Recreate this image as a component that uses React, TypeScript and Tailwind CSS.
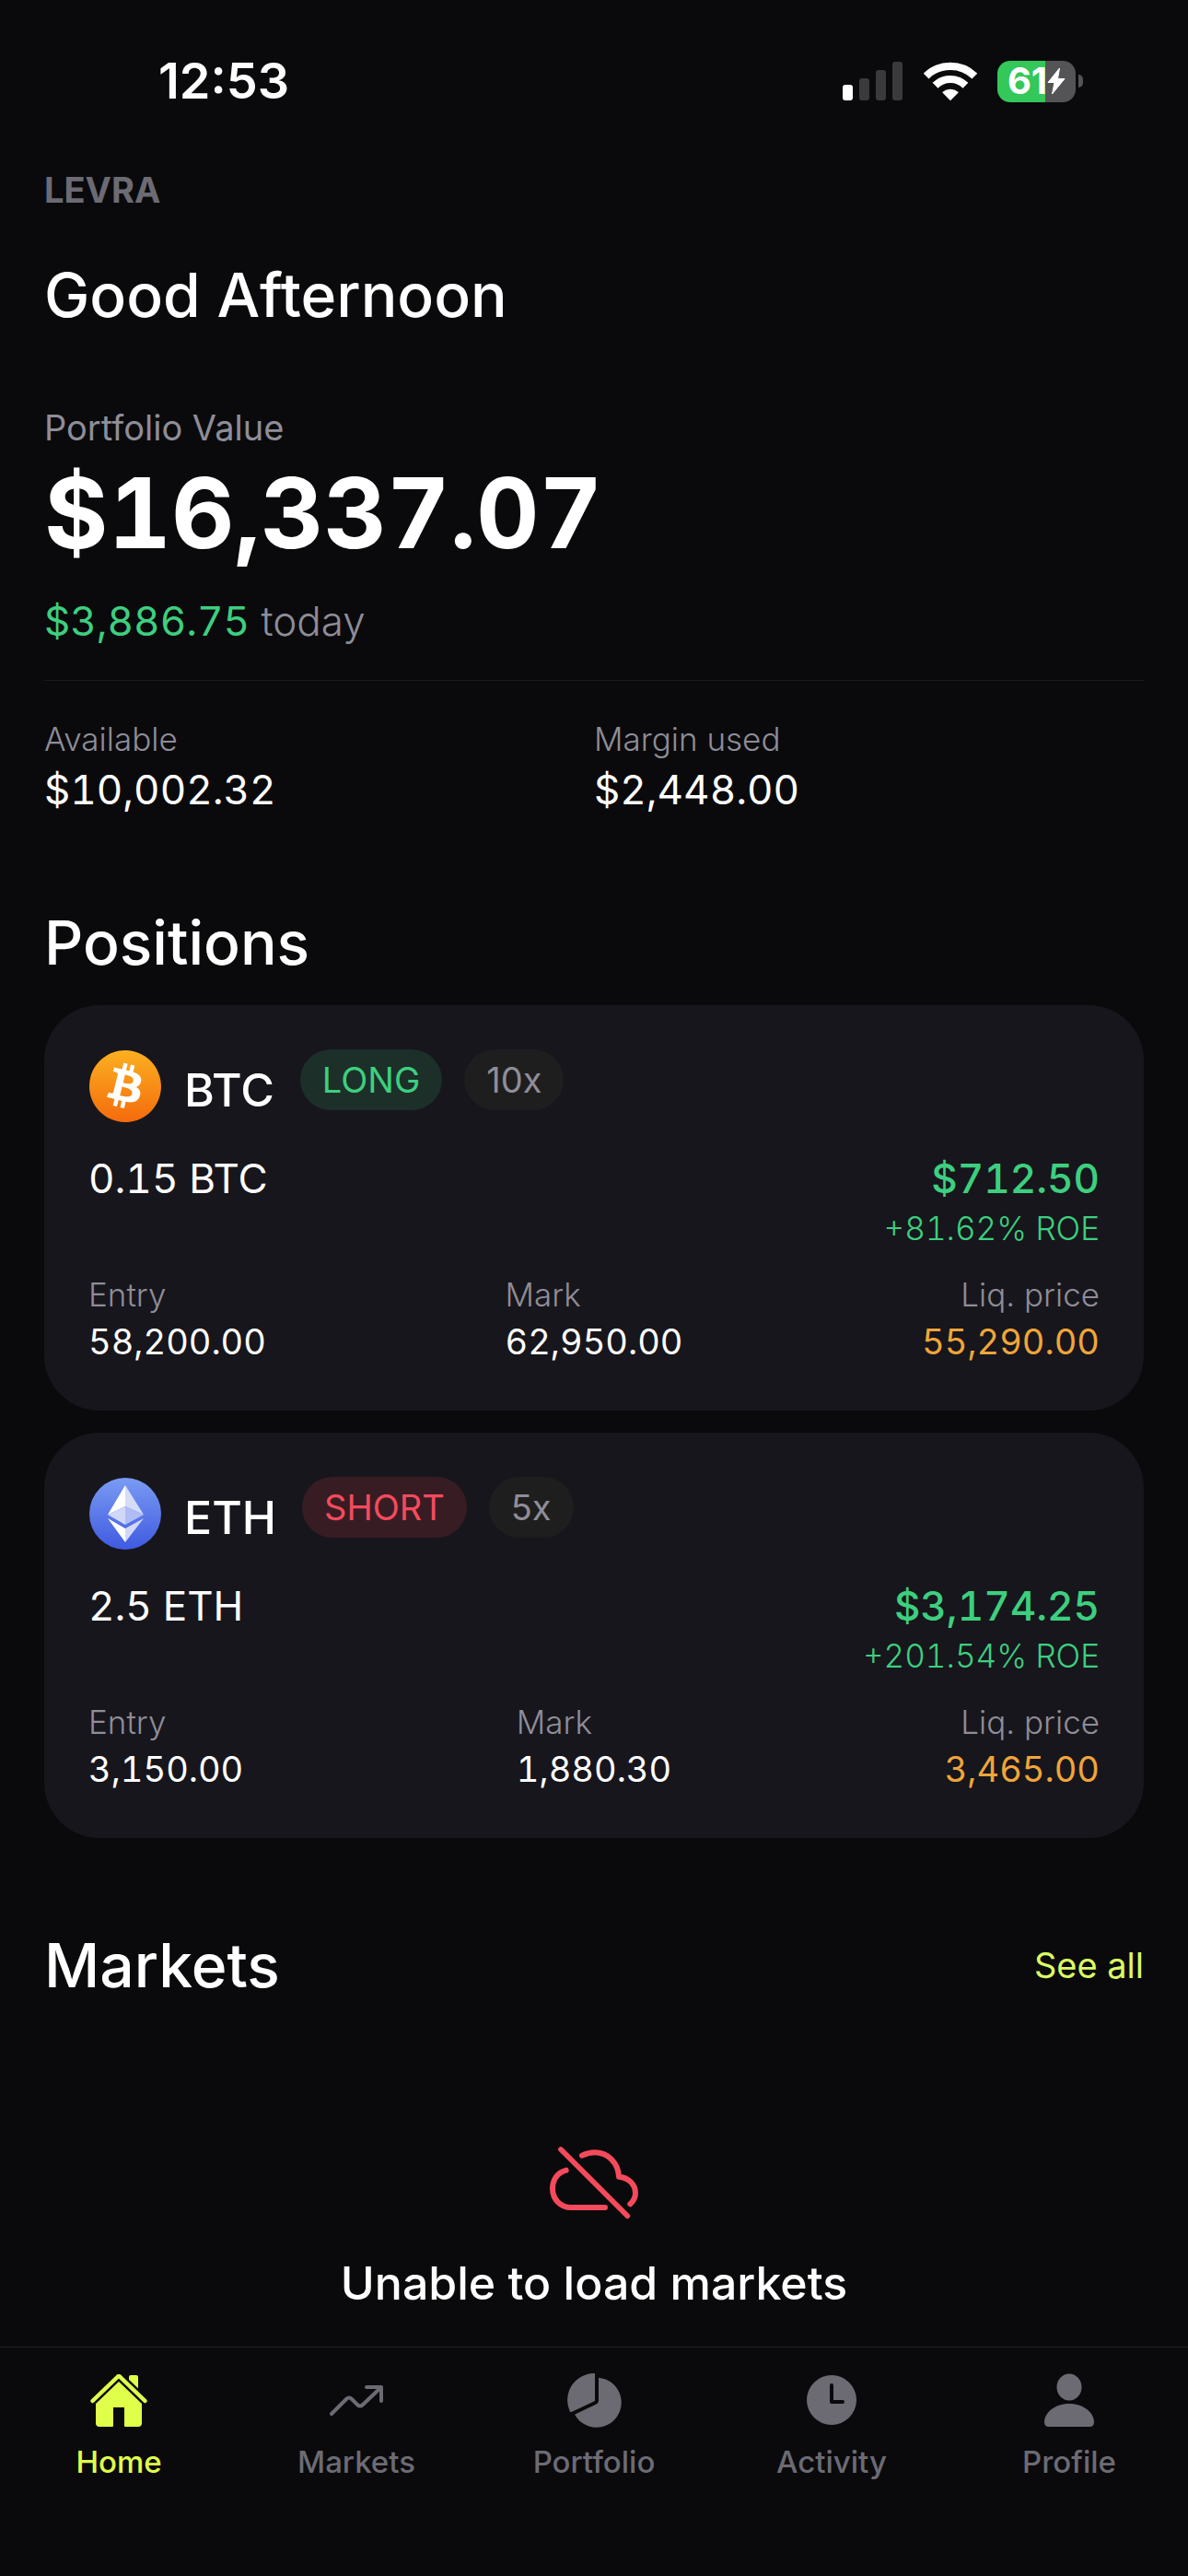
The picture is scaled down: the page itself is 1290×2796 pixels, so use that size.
import type { ReactNode } from 'react';
import { SiBitcoin } from 'react-icons/si';

type Position = {
  symbol: string;
  icon: ReactNode;
  side: 'LONG' | 'SHORT';
  leverage: string;
  size: string;
  pnl: string;
  roe: string;
  entry: string;
  mark: string;
  liq: string;
};

const positions: Position[] = [
  {
    symbol: 'BTC',
    icon: <BtcCoin />,
    side: 'LONG',
    leverage: '10x',
    size: '0.15 BTC',
    pnl: '$712.50',
    roe: '+81.62% ROE',
    entry: '58,200.00',
    mark: '62,950.00',
    liq: '55,290.00',
  },
  {
    symbol: 'ETH',
    icon: <EthCoin />,
    side: 'SHORT',
    leverage: '5x',
    size: '2.5 ETH',
    pnl: '$3,174.25',
    roe: '+201.54% ROE',
    entry: '3,150.00',
    mark: '1,880.30',
    liq: '3,465.00',
  },
];

const tabs = [
  { label: 'Home', icon: <HomeIcon />, active: true },
  { label: 'Markets', icon: <TrendIcon />, active: false },
  { label: 'Portfolio', icon: <PieIcon />, active: false },
  { label: 'Activity', icon: <ClockIcon />, active: false },
  { label: 'Profile', icon: <ProfileIcon />, active: false },
];

function BtcCoin() {
  return (
    <span className="flex size-20 items-center justify-center">
      <svg className="size-0" aria-hidden="true">
        <defs>
          <linearGradient id="btc" x1="0" y1="0" x2="0" y2="1">
            <stop offset="0" stopColor="#fbb021" />
            <stop offset="1" stopColor="#f46b0c" />
          </linearGradient>
        </defs>
      </svg>
      <span className="rounded-full bg-[radial-gradient(circle,white_60%,transparent_62%)]">
        <SiBitcoin size={78} fill="url(#btc)" />
      </span>
    </span>
  );
}

function EthCoin() {
  return (
    <svg className="size-20" viewBox="0 0 80 80" aria-hidden="true">
      <defs>
        <linearGradient id="eth" x1="0" y1="0" x2="0" y2="1">
          <stop offset="0" stopColor="#7a9bf3" />
          <stop offset="1" stopColor="#3f5ae0" />
        </linearGradient>
      </defs>
      <circle cx="40" cy="40" r="39" fill="url(#eth)" />
      <path d="M40 9 21 41l19-9z" fill="#fff" />
      <path d="M40 9l20 32-20-9z" fill="#d5dcf8" />
      <path d="M21 41l19-9v20z" fill="#d0d7f8" />
      <path d="M60 41l-20-9v20z" fill="#b0bdf4" />
      <path d="M21 45l19 11v15z" fill="#fff" />
      <path d="M60 45 40 56v15z" fill="#d0d7f8" />
    </svg>
  );
}

function HomeIcon() {
  return (
    <svg className="size-[72px]" viewBox="0 0 72 72" fill="currentColor" aria-hidden="true">
      <path d="M47 22V10a2 2 0 0 1 2-2h6a2 2 0 0 1 2 2v22z" />
      <path d="M36 9.500 7.500 36.500M36 9.500 64.500 36.500" stroke="#0a0a0c" strokeWidth="10" />
      <path d="M36 15 61 39v21a4 4 0 0 1-4 4H43a1 1 0 0 1-1-1V43H30v20a1 1 0 0 1-1 1H15a4 4 0 0 1-4-4V39z" />
      <path
        d="M7.500 36 34.500 10a2 2 0 0 1 3 0L64.500 36"
        fill="none"
        stroke="currentColor"
        strokeWidth="4.500"
        strokeLinecap="round"
      />
    </svg>
  );
}

function TrendIcon() {
  return (
    <svg
      className="size-[72px]"
      viewBox="0 0 72 72"
      fill="none"
      stroke="currentColor"
      strokeWidth="4"
      strokeLinecap="round"
      strokeLinejoin="round"
      aria-hidden="true"
    >
      <path d="M9 50 25 34q3-3 6 0l6 6q3 3 6 0L62 22" />
      <path d="M47 21h16v15" />
    </svg>
  );
}

function PieIcon() {
  return (
    <svg className="size-[72px]" viewBox="0 0 72 72" fill="currentColor" aria-hidden="true">
      <path d="M37 6.500q0-.5-1-.5A29 29 0 0 0 10 47.500q.5 1 1.500.5L36 36.500q1-.5 1-1.500z" />
      <path d="M41 11.500q0-.8 1-.6A27 27 0 1 1 15.500 51.500q-.4-.8.5-1.200L38.500 39.500Q41 38.300 41 36z" />
    </svg>
  );
}

function ClockIcon() {
  return (
    <svg className="size-[72px]" viewBox="0 0 72 72" aria-hidden="true">
      <circle cx="36" cy="35" r="27" fill="currentColor" />
      <path
        d="M36 19v18h12"
        fill="none"
        stroke="#0a0a0c"
        strokeWidth="4"
        strokeLinecap="round"
        strokeLinejoin="round"
      />
    </svg>
  );
}

function ProfileIcon() {
  return (
    <svg className="size-[72px]" viewBox="0 0 72 72" fill="currentColor" aria-hidden="true">
      <ellipse cx="36" cy="21" rx="13.500" ry="14.500" />
      <path d="M9 59c0-10 11-20 27-20s27 10 27 20q0 5-5 5H14q-5 0-5-5z" />
    </svg>
  );
}

function CloudOffIcon() {
  return (
    <svg
      className="h-[82px] w-[100px] text-[#f54a5c]"
      viewBox="105 84 300 246"
      fill="none"
      stroke="currentColor"
      strokeWidth="18"
      strokeLinecap="round"
      aria-hidden="true"
    >
      <path d="M147 99 364 316" strokeWidth="17" />
      <path d="M164 167C133 175 120 201 120 227c0 34 26 61 60 61h111" />
      <path d="M216 119c14-7 26-10 41-10 44 0 77 34 79 79 30 2 54 24 54 53 0 15-6 26-17 36" strokeLinejoin="round" />
    </svg>
  );
}

function StatusBar() {
  return (
    <div className="flex h-44 items-center justify-between pr-[114px] pl-[172px]">
      <span className="text-[54px] leading-none font-semibold">12:53</span>
      <div className="flex items-center">
        <svg className="h-[42px] w-[66px]" viewBox="0 0 66 42" aria-hidden="true">
          <rect x="0" y="25" width="11" height="17" rx="3" fill="#fff" />
          <rect x="18" y="18" width="11" height="24" rx="3" fill="#3a3a3c" />
          <rect x="36" y="9" width="11" height="33" rx="3" fill="#3a3a3c" />
          <rect x="54" y="0" width="11" height="42" rx="3" fill="#3a3a3c" />
        </svg>
        <svg className="ml-[22px] h-[43px] w-[58px]" viewBox="370 74 176 130" fill="none" aria-hidden="true">
          <path d="M378 121a114 114 0 0 1 160 0" stroke="#fff" strokeWidth="25" />
          <path d="M408 152a71 71 0 0 1 100 0" stroke="#fff" strokeWidth="25" />
          <path d="M458 199 434 175A37 37 0 0 1 482 175z" fill="#fff" stroke="#fff" strokeWidth="4" strokeLinejoin="round" />
        </svg>
        <div className="ml-[22px] flex h-[45px] w-[85px] items-center justify-center rounded-[14px] bg-[linear-gradient(to_right,#34c759_61%,#545457_61%)]">
          <span className="text-[40px] leading-none font-bold">61</span>
          <svg className="h-[30px] w-5" viewBox="0 0 20 30" fill="#fff" aria-hidden="true">
            <path
              d="M13.500 1 1 16.500h7L5.500 29 19 12.500h-7.500z"
              stroke="#fff"
              strokeWidth="1"
              strokeLinejoin="round"
            />
          </svg>
        </div>
        <span className="ml-[3px] h-[14px] w-[5px] rounded-r-full bg-[#545457]" />
      </div>
    </div>
  );
}

function PositionCard({ position }: { position: Position }) {
  const sideStyle = position.side === 'LONG' ? 'bg-[#1c2f29] text-[#3dcf7f]' : 'bg-[#381c24] text-[#f54a5c]';

  return (
    <article className="rounded-[60px] bg-[#17161c] p-12">
      <div className="flex h-20">
        {position.icon}
        <h3 className="ml-6 self-end text-[50px] leading-[72px] font-medium">{position.symbol}</h3>
        <span className={`ml-7 self-start rounded-full px-6 text-[38px] leading-[66px] ${sideStyle}`}>
          {position.side}
        </span>
        <span className="ml-6 self-start rounded-full bg-[#1e1e1e] px-6 text-[38px] leading-[66px] text-[#8f8d98]">
          {position.leverage}
        </span>
      </div>

      <div className="mt-[30px] flex justify-between">
        <p className="text-[44px] leading-[60px] tabular-nums">{position.size}</p>
        <div className="text-right text-[#3dcf7f]">
          <p className="text-[44px] leading-[60px] font-medium tabular-nums">{position.pnl}</p>
          <p className="text-[35px] leading-[48px] font-light tabular-nums">{position.roe}</p>
        </div>
      </div>

      <dl className="mt-6 flex justify-between">
        <div>
          <dt className="text-[35px] leading-[48px] font-light text-[#8f8d98]">Entry</dt>
          <dd className="text-[38px] leading-[54px] tabular-nums">{position.entry}</dd>
        </div>
        <div>
          <dt className="text-[35px] leading-[48px] font-light text-[#8f8d98]">Mark</dt>
          <dd className="text-[38px] leading-[54px] tabular-nums">{position.mark}</dd>
        </div>
        <div className="text-right">
          <dt className="text-[35px] leading-[48px] font-light text-[#8f8d98]">Liq. price</dt>
          <dd className="text-[38px] leading-[54px] text-[#f0a53a] tabular-nums">{position.liq}</dd>
        </div>
      </dl>
    </article>
  );
}

export default function App() {
  return (
    <div className="flex min-h-screen flex-col bg-[#0a0a0c] font-['Inter',sans-serif] text-white">
      <StatusBar />

      <main className="flex-1 px-12">
        <p className="text-[38px] leading-[60px] font-bold text-[#6c6b74]">LEVRA</p>
        <h1 className="mt-11 text-[66px] leading-[80px] font-medium">Good Afternoon</h1>

        <section className="mt-[74px]">
          <h2 className="text-[38px] leading-[60px] text-[#8f8d98]">Portfolio Value</h2>
          <p className="text-[106px] leading-[126px] font-bold tabular-nums">$16,337.07</p>
          <p className="mt-6 text-[44px] leading-[60px]">
            <span className="text-[#3dcf7f] tabular-nums">$3,886.75</span>{' '}
            <span className="font-light text-[#8f8d98]">today</span>
          </p>
          <dl className="mt-[34px] grid grid-cols-2 border-t border-[#1b1b1e] pt-9">
            <div>
              <dt className="text-[35px] leading-[54px] font-light text-[#8f8d98]">Available</dt>
              <dd className="text-[44px] leading-[56px] tabular-nums">$10,002.32</dd>
            </div>
            <div>
              <dt className="text-[35px] leading-[54px] font-light text-[#8f8d98]">Margin used</dt>
              <dd className="text-[44px] leading-[56px] tabular-nums">$2,448.00</dd>
            </div>
          </dl>
        </section>

        <section className="mt-[98px]">
          <h2 className="text-[66px] leading-[80px] font-medium">Positions</h2>
          <div className="mt-7 flex flex-col gap-6">
            {positions.map((position) => (
              <PositionCard key={position.symbol} position={position} />
            ))}
          </div>
        </section>

        <section className="mt-[98px]">
          <div className="flex items-center justify-between">
            <h2 className="text-[66px] leading-[80px] font-medium">Markets</h2>
            <a href="#markets" className="text-[38px] text-[#dcfb63]">
              See all
            </a>
          </div>
          <div className="flex flex-col items-center pt-[155px] pb-9">
            <CloudOffIcon />
            <p className="mt-9 text-[50px] leading-[64px] font-medium">Unable to load markets</p>
          </div>
        </section>
      </main>

      <nav className="sticky bottom-0 grid grid-cols-5 border-t border-[#242427] bg-[#0a0a0c] pt-[22px] pb-[102px]">
        {tabs.map((tab) => (
          <a
            key={tab.label}
            href={`#${tab.label.toLowerCase()}`}
            aria-current={tab.active ? 'page' : undefined}
            className={`flex flex-col items-center gap-2 ${tab.active ? 'text-[#e0ff4a]' : 'text-[#6c6b74]'}`}
          >
            {tab.icon}
            <span className="text-[33px] leading-[44px] font-medium">{tab.label}</span>
          </a>
        ))}
      </nav>
    </div>
  );
}
